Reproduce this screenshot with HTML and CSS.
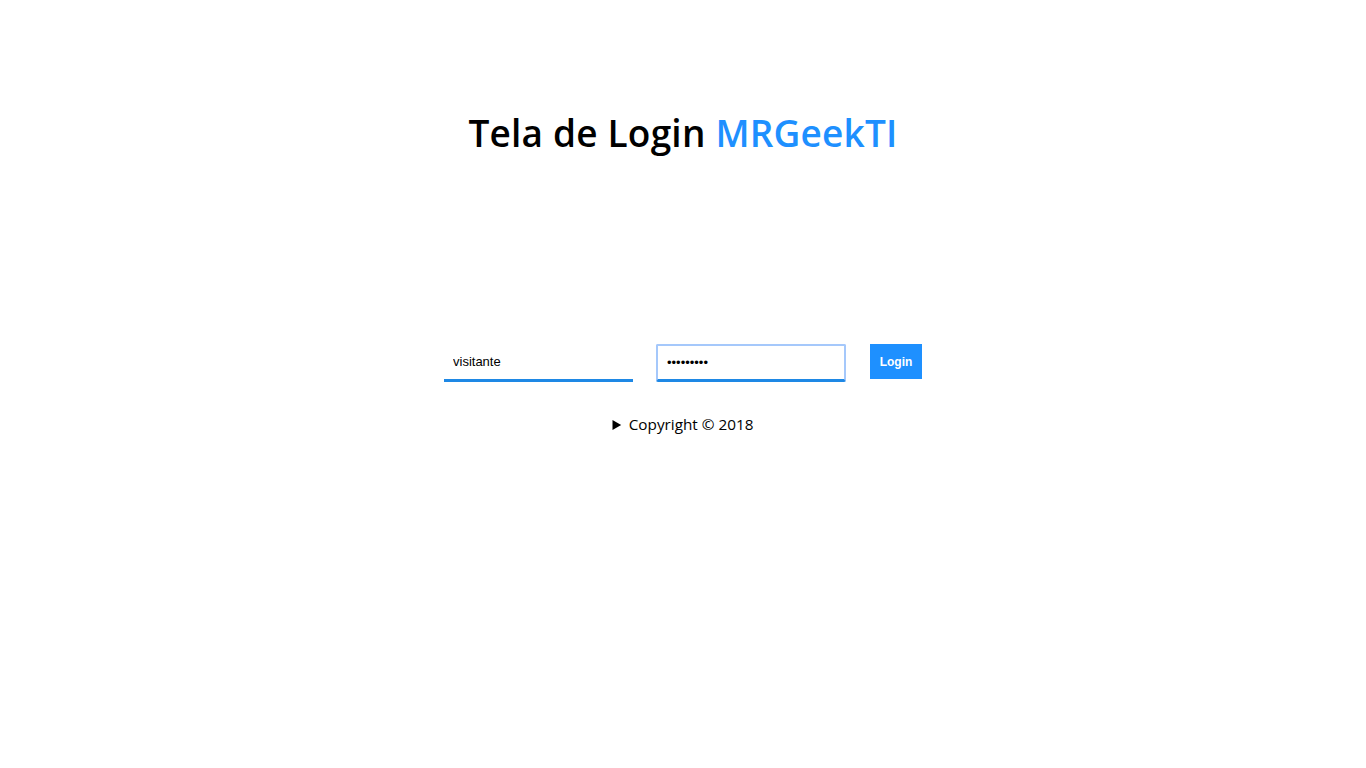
FILE: index.html
```html
<!DOCTYPE html>
<html lang="pt-BR">
<head>
<meta charset="utf-8">
<title>Tela de Login MRGeekTI</title>
<link rel="stylesheet" href="styles.css">
</head>
<body>
<main class="page">
  <h1 class="title">Tela de Login <span class="brand">MRGeekTI</span></h1>
  <form class="login" onsubmit="return false">
    <input class="field" type="text" value="visitante">
    <input class="field field-focus" type="password" value="123456789">
    <button class="btn" type="submit">Login</button>
  </form>
  <details class="footer">
    <summary>Copyright © 2018</summary>
  </details>
</main>
</body>
</html>
```
FILE: styles.css
```css
html, body {
  margin: 0;
  padding: 0;
  background: #fff;
}
.page {
  display: flex;
  flex-direction: column;
  align-items: center;
  padding-top: 108px;
}
.title {
  margin: 0;
  font-family: "Open Sans", sans-serif;
  font-weight: 600;
  font-size: 37px;
  line-height: 50px;
  color: #000;
  letter-spacing: 0.2px;
}
.brand {
  color: #1e90ff;
}
.login {
  display: flex;
  align-items: flex-start;
  margin-top: 186px;
  margin-left: 0;
}
.field {
  box-sizing: border-box;
  width: 189px;
  height: 38px;
  margin-right: 23px;
  padding: 0 9px;
  border: 0;
  border-bottom: 3px solid #1e88e5;
  background: #fff;
  font-family: "Liberation Sans", Arial, sans-serif;
  font-size: 13px;
  color: #000;
  outline: none;
}
.field-focus {
  width: 190px;
  margin-right: 24px;
  border: 2px solid #a5c8fb;
  border-bottom: 3px solid #1e88e5;
  border-radius: 2px;
  padding: 0 9px;
}
.btn {
  box-sizing: border-box;
  width: 52px;
  height: 35px;
  border: 0;
  background: #1e90ff;
  color: #fff;
  font-family: "Liberation Sans", Arial, sans-serif;
  font-size: 12px;
  font-weight: bold;
  padding: 0;
}
.footer {
  margin-top: 32px;
  font-family: "Open Sans", sans-serif;
  font-size: 15.3px;
  color: #000;
}
.footer summary {
  cursor: pointer;
}
```
